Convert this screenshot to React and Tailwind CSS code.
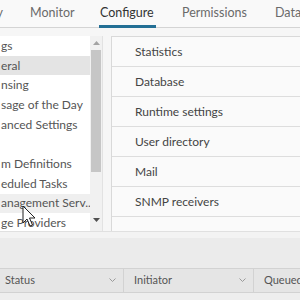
export default function App() {
  const left = [
    { t: "gs" },
    { t: "eral", sel: true },
    { t: "nsing" },
    { t: "sage of the Day" },
    { t: "anced Settings" },
    { t: "" },
    { t: "m Definitions" },
    { t: "eduled Tasks" },
    { t: "anagement Serv..", hover: true },
    { t: "ge Providers" },
  ];
  const right = ["Statistics", "Database", "Runtime settings", "User directory", "Mail", "SNMP receivers", ""];
  return (
    <div className="relative w-[300px] h-[300px] overflow-hidden bg-[#f6f6f6] flex flex-col font-[family-name:Lato,sans-serif]">
      {/* tabs */}
      <div className="h-[28px] shrink-0 flex border-b border-[#d4d4d4] text-[12.5px] text-[#6a6a6a] bg-[#f9f9f9]">
        <div className="w-[30px] shrink-0 flex items-center justify-end overflow-hidden">
          <span className="pr-[27px] whitespace-nowrap">Summary</span>
        </div>
        <div className="w-[70px] shrink-0 flex items-center">Monitor</div>
        <div className="w-[82px] shrink-0 flex items-stretch">
          <span className="flex items-center pt-[2px] -mb-px border-b-[3px] border-[#236f95] text-[#333] pr-[2px] -ml-px pl-px">Configure</span>
        </div>
        <div className="w-[93px] shrink-0 flex items-center">Permissions</div>
        <div className="flex items-center whitespace-nowrap">Datastores</div>
      </div>

      {/* body */}
      <div className="h-[203px] shrink-0 pt-[8px] flex">
        <div className="w-[103px] shrink-0 bg-white flex border-r border-[#e2e2e2]">
          <div className="w-[90px] shrink-0 overflow-hidden text-[12px] text-[#555]">
            {left.map((r, i) => (
              <div
                key={i}
                className={
                  "h-[19.7px] flex items-center whitespace-nowrap pl-px " +
                  (r.sel ? "bg-[#e4e4e4]" : r.hover ? "bg-[#efefef]" : "")
                }
              >
                {r.t}
              </div>
            ))}
          </div>
          <div className="w-[12px] shrink-0 bg-[#f1f1f1] flex flex-col items-center">
            <div className="h-[14px] flex items-center justify-center">
              <svg width="7" height="4" viewBox="0 0 7 4"><path d="M0 4 L3.5 0 L7 4 Z" fill="#a3a3a3" /></svg>
            </div>
            <div className="w-[10px] h-[122px] bg-[#c6c6c6]" />
            <div className="flex-1" />
            <div className="h-[14px] flex items-center justify-center mb-[4px]">
              <svg width="7" height="4" viewBox="0 0 7 4"><path d="M0 0 L3.5 4 L7 0 Z" fill="#505050" /></svg>
            </div>
          </div>
        </div>
        <div className="flex-1 ml-[8px] border-l border-t border-[#d9d9d9] bg-[#fafafa] text-[12px] text-[#444]">
          {right.map((t, i) => (
            <div key={i} className="h-[30px] border-b border-[#dddddd] flex items-center pl-[23px] pt-px">
              {t}
            </div>
          ))}
        </div>
      </div>

      {/* bottom */}
      <div className="h-[7px] shrink-0 bg-[#f3f3f3] border-t border-[#e0e0e0]" />
      <div className="h-[30px] shrink-0 bg-[#ebebeb]" />
      <div className="h-[25px] shrink-0 flex bg-[#e5e5e5] border-y border-[#d2d2d2] text-[11px] text-[#555]">
        <div className="w-[124px] shrink-0 flex items-center justify-between pl-[5px] pr-[7px] border-r border-[#d2d2d2]">
          <span>Status</span>
          <svg width="7" height="5" viewBox="0 0 7 5"><path d="M0.5 0.5 L3.5 3.5 L6.5 0.5" fill="none" stroke="#999" strokeWidth="1" /></svg>
        </div>
        <div className="w-[130px] shrink-0 flex items-center justify-between pl-[10px] pr-[7px] border-r border-[#d2d2d2]">
          <span>Initiator</span>
          <svg width="7" height="5" viewBox="0 0 7 5"><path d="M0.5 0.5 L3.5 3.5 L6.5 0.5" fill="none" stroke="#999" strokeWidth="1" /></svg>
        </div>
        <div className="flex items-center pl-[10px] whitespace-nowrap">Queued For</div>
      </div>
      <div className="flex-1 bg-[#eeeeee]" />

      {/* mouse cursor */}
      <svg className="absolute left-[22px] top-[205px]" width="14" height="22" viewBox="0 0 14 22">
        <path d="M1 1 L1 18 L5 14 L8 21 L10.5 20 L7.5 13 L13 13 Z" fill="#ffffff" stroke="#222" strokeWidth="1" strokeLinejoin="round" />
      </svg>
    </div>
  );
}
